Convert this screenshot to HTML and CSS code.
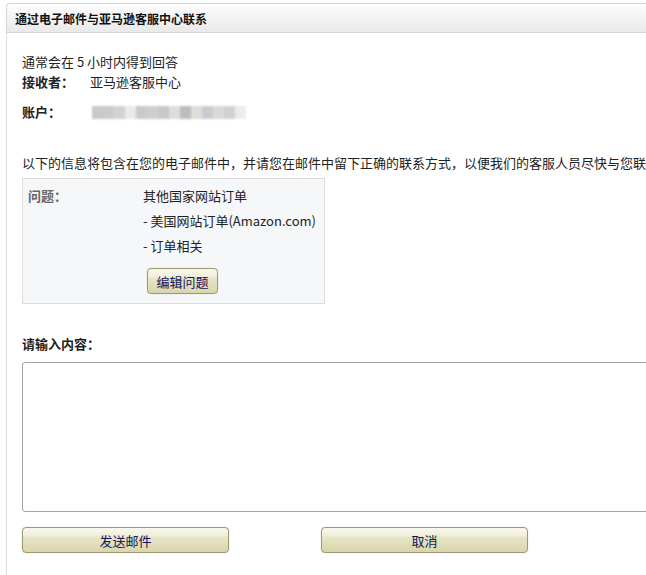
FILE: index.html
```html
<!DOCTYPE html>
<html lang="zh-CN">
<head>
    <meta charset="UTF-8">
    <title>通过电子邮件与亚马逊客服中心联系</title>
    <link rel="stylesheet" href="styles.css">
</head>
<body>

<div class="page">
    <div class="box-head">通过电子邮件与亚马逊客服中心联系</div>

    <div class="box-body">
        <div class="line">通常会在 5 小时内得到回答</div>
        <div class="line pair">
            <span class="key">接收者：</span>
            <span>亚马逊客服中心</span>
        </div>
        <div class="line pair account">
            <span class="key">账户：</span>
            <span class="blurred">
                <i style="background:#c9c9c9"></i><i style="background:#cbcbcb"></i><i style="background:#d2d2d2"></i><i style="background:#eaeaea"></i><i style="background:#c7c9cb"></i><i style="background:#cfcfca"></i><i style="background:#c5c9cb"></i><i style="background:#deddd8"></i><i style="background:#bbbdc1"></i><i style="background:#e1ded7"></i><i style="background:#c9cccf"></i><i style="background:#d9d9db"></i><i style="background:#cfd0d4"></i><i style="background:#ececec"></i>
            </span>
        </div>

        <div class="line notice">以下的信息将包含在您的电子邮件中，并请您在邮件中留下正确的联系方式，以便我们的客服人员尽快与您联系。</div>

        <div class="issue">
            <div class="issue-key">问题：</div>
            <div class="issue-val">
                <div class="row">其他国家网站订单</div>
                <div class="row">- 美国网站订单(Amazon.com)</div>
                <div class="row">- 订单相关</div>
                <button class="btn btn-small">编辑问题</button>
            </div>
        </div>

        <div class="line key prompt">请输入内容：</div>
        <textarea class="content"></textarea>

        <div class="actions">
            <button class="btn btn-wide">发送邮件</button>
            <button class="btn btn-wide">取消</button>
        </div>
    </div>
</div>

</body>
</html>
```

FILE: styles.css
```css
html, body {
    margin: 0;
    padding: 0;
    overflow: hidden;
    background-color: #fff;
}

body {
    font-family: "Noto Sans CJK SC", "Liberation Sans", sans-serif;
    font-size: 13px;
    color: #222;
}

.page {
    width: 640px;
    margin: 3px 0 0 6px;
    overflow: hidden;
}

.box-head {
    height: 28px;
    line-height: 29px;
    padding-left: 8px;
    font-size: 12px;
    font-weight: bold;
    color: #111;
    border: 1px solid #d6d6d6;
    border-right: none;
    border-radius: 4px 0 0 0;
    background: linear-gradient(#fdfdfd, #e9e9e9);
}

.box-body {
    border-left: 1px solid #dedede;
    padding: 19px 0 0 15px;
    height: 542px;
}

.line {
    line-height: 20px;
    white-space: nowrap;
}

.key {
    font-weight: bold;
}

.pair {
    display: flex;
}

.pair .key {
    width: 68px;
}

.account {
    margin-top: 10px;
    align-items: center;
}

.blurred {
    display: flex;
    margin-left: 2px;
    filter: blur(0.8px);
}

.blurred i {
    width: 11px;
    height: 13px;
}

.notice {
    margin-top: 31px;
    width: 624px;
    overflow: hidden;
}

.issue {
    display: flex;
    width: 291px;
    margin-top: 5px;
    padding: 4px 5px 9px;
    background-color: #f6f7f9;
    border: 1px solid #dcdcdc;
}

.issue-key {
    width: 115px;
    line-height: 25px;
    font-weight: bold;
    color: #666;
}

.issue-val .row {
    line-height: 25px;
}

.btn {
    font-family: inherit;
    font-size: 13px;
    color: #14145a;
    height: 26px;
    padding: 0;
    border: 1px solid #9c9a72;
    border-radius: 4px;
    background: linear-gradient(#f8f7ee 0%, #f1f0dc 30%, #e6e4c4 40%, #d9d6ae 100%);
    box-shadow: 0 0 1px rgba(120, 118, 80, 0.4);
    cursor: pointer;
}

.btn-small {
    width: 71px;
    margin: 10px 0 0 4px;
}

.prompt {
    margin-top: 30px;
}

.content {
    display: block;
    width: 700px;
    height: 150px;
    margin-top: 8px;
    box-sizing: border-box;
    border: 1px solid #a4a4a4;
    border-radius: 3px;
    resize: none;
}

.actions {
    display: flex;
    gap: 92px;
    margin-top: 15px;
}

.btn-wide {
    width: 207px;
}
```
